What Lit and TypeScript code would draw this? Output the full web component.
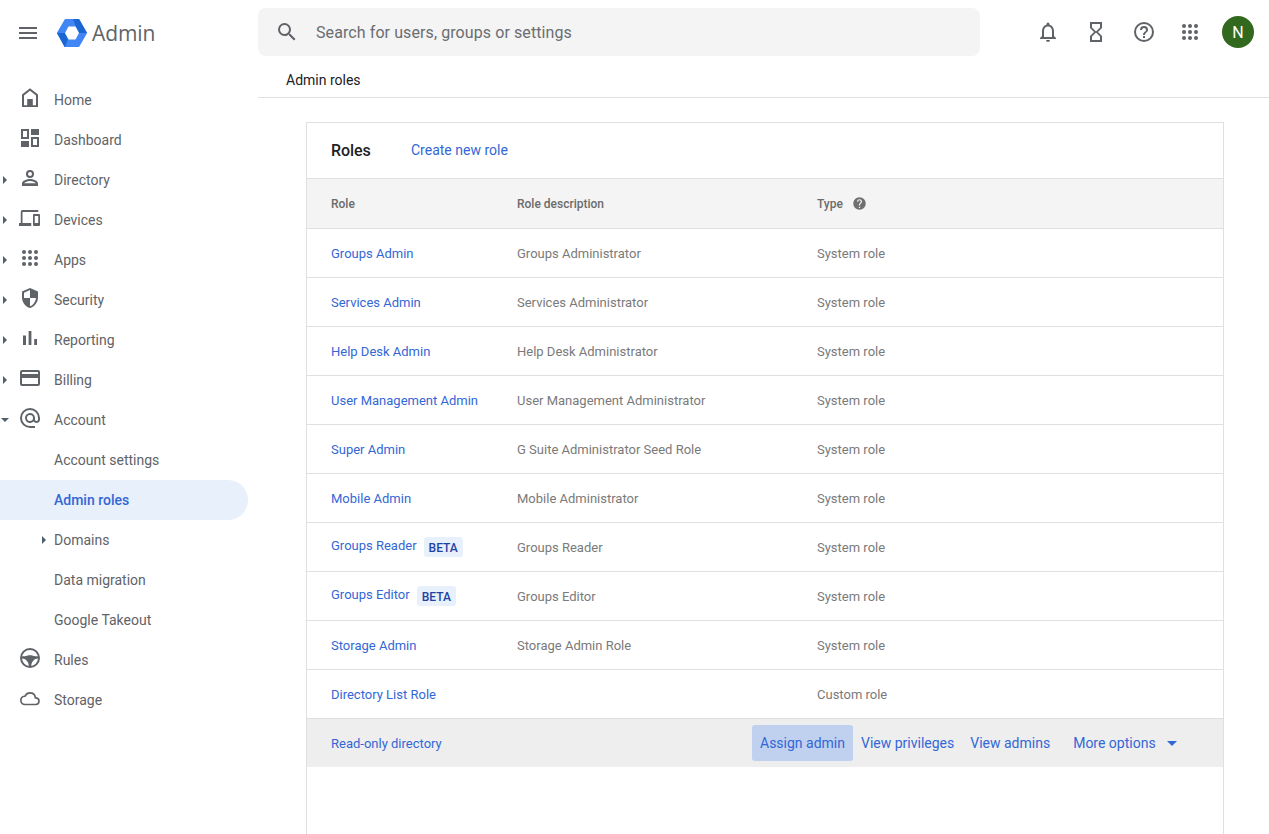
import { LitElement, html, css, svg } from "lit";
import { customElement } from "lit/decorators.js";

const g = (inner: unknown, cls = "ic") => html`<svg class=${cls} viewBox="0 0 24 24" fill="#5f6368">${inner}</svg>`;

const icons: Record<string, unknown> = {
  home: svg`<path fill-rule="evenodd" d="M12 2.200 4 8.600V21h16V8.600L12 2.200ZM12 4.700l6 4.800V19.200h-3.200V13H9.200v6.200H6V9.500l6-4.800Z"/>`,
  dashboard: svg`<path fill-rule="evenodd" d="M3 3h8v10H3V3Zm2 2v6h4V5H5ZM13 3h8v6h-8V3ZM3 15h8v6H3v-6ZM13 11h8v10h-8V11Zm2 2v6h4v-6h-4Z"/>`,
  person: svg`<path fill-rule="evenodd" d="M12 4a4 4 0 1 0 0 8 4 4 0 0 0 0-8Zm0 2a2 2 0 1 1 0 4 2 2 0 0 1 0-4ZM12 13c-3 0-8 1.500-8 4.500V20h16v-2.500C20 14.500 15 13 12 13Zm0 2c2.500 0 5.200 1.100 5.900 2.300H6.100C6.800 16.100 9.500 15 12 15Z"/>`,
  devices: svg`<path transform="translate(1 0) scale(.875 1)" fill-rule="evenodd" d="M4 6h18V4H4a2 2 0 0 0-2 2v11H0v3h14v-3H4V6Zm19 2h-6a1 1 0 0 0-1 1v10a1 1 0 0 0 1 1h6a1 1 0 0 0 1-1V9a1 1 0 0 0-1-1Zm-1 9h-4v-7h4v7Z"/>`,
  apps: svg`<circle cx="6" cy="6" r="2"/><circle cx="12" cy="6" r="2"/><circle cx="18" cy="6" r="2"/><circle cx="6" cy="12" r="2"/><circle cx="12" cy="12" r="2"/><circle cx="18" cy="12" r="2"/><circle cx="6" cy="18" r="2"/><circle cx="12" cy="18" r="2"/><circle cx="18" cy="18" r="2"/>`,
  security: svg`<path transform="translate(0 1)" d="M12 1 4 4.500v5.700c0 5 3.400 9.700 8 10.800 4.600-1.100 8-5.800 8-10.800V4.500L12 1Zm0 10h6c-.5 3.900-3 7.400-6 8.300V11H6V5.800l6-2.700V11Z"/>`,
  reporting: svg`<path d="M5 9.500h3V19H5V9.500ZM10.600 5h2.800v14h-2.800V5ZM16.200 13H19v6h-2.800v-6Z"/>`,
  billing: svg`<path fill-rule="evenodd" d="M20 4H4a2 2 0 0 0-2 2v12a2 2 0 0 0 2 2h16a2 2 0 0 0 2-2V6a2 2 0 0 0-2-2Zm0 14H4v-6h16v6Zm0-10H4V6h16v2Z"/>`,
  account: svg`<path fill-rule="evenodd" d="M12 2a10 10 0 0 0 0 20h5v-2h-5a8 8 0 1 1 8-8v1.430c0 .79-.71 1.570-1.500 1.570s-1.500-.78-1.500-1.570V12a5 5 0 1 0-1.460 3.530c.65.890 1.770 1.470 2.960 1.470 1.970 0 3.500-1.600 3.500-3.570V12A10 10 0 0 0 12 2Zm0 13a3 3 0 1 1 0-6 3 3 0 0 1 0 6Z"/>`,
  rules: svg`<path fill-rule="evenodd" d="M12 2a10 10 0 1 0 0 20 10 10 0 0 0 0-20Zm0 2a8 8 0 1 1 0 16 8 8 0 0 1 0-16Z"/><path d="M3 10.500c3 0 5-.5 6-.7 2-.6 4-.6 6 0 1 .2 3 .7 6 .7v2c-2.500 0-4 .5-5 1.500-1.200 1-2 2.200-2.400 3.500L13 21h-2l-.6-3.500C10 16.200 9.200 15 8 14c-1-1-2.500-1.500-5-1.500v-2Z"/>`,
  storage: svg`<path transform="translate(2 2.700) scale(.833)" fill-rule="evenodd" d="M19.350 10.040A7.490 7.490 0 0 0 12 4a7.480 7.480 0 0 0-6.650 4.040A5.990 5.990 0 0 0 0 14a6 6 0 0 0 6 6h13a5 5 0 0 0 .35-9.960ZM19 18H6a4 4 0 0 1-.38-7.980l1.020-.1.480-.9A5.470 5.470 0 0 1 12 6a5.500 5.500 0 0 1 5.390 4.430l.3 1.500 1.530.11A3 3 0 0 1 19 18Z"/>`,
};

const nav = [
  { l: "Home", i: "home" },
  { l: "Dashboard", i: "dashboard" },
  { l: "Directory", i: "person", a: "r" },
  { l: "Devices", i: "devices", a: "r" },
  { l: "Apps", i: "apps", a: "r" },
  { l: "Security", i: "security", a: "r" },
  { l: "Reporting", i: "reporting", a: "r" },
  { l: "Billing", i: "billing", a: "r" },
  { l: "Account", i: "account", a: "d" },
  { l: "Account settings" },
  { l: "Admin roles", sel: true },
  { l: "Domains", sub: true },
  { l: "Data migration" },
  { l: "Google Takeout" },
  { l: "Rules", i: "rules" },
  { l: "Storage", i: "storage" },
];

const roles = [
  ["Groups Admin", "Groups Administrator", "System role"],
  ["Services Admin", "Services Administrator", "System role"],
  ["Help Desk Admin", "Help Desk Administrator", "System role"],
  ["User Management Admin", "User Management Administrator", "System role"],
  ["Super Admin", "G Suite Administrator Seed Role", "System role"],
  ["Mobile Admin", "Mobile Administrator", "System role"],
  ["Groups Reader", "Groups Reader", "System role", true],
  ["Groups Editor", "Groups Editor", "System role", true],
  ["Storage Admin", "Storage Admin Role", "System role"],
  ["Directory List Role", "", "Custom role"],
] as [string, string, string, boolean?][];

const arrowR = html`<svg class="ar" viewBox="0 0 6 8"><path d="M1 0l4 4-4 4z"/></svg>`;
const arrowD = html`<svg class="ad" viewBox="0 0 8 6"><path d="M0 1h8L4 5z"/></svg>`;

@customElement("app-root")
export class AppRoot extends LitElement {
  static styles = css`
    :host { display: block; width: 1269px; height: 834px; overflow: hidden; background: #fff;
      font-family: Roboto, "Liberation Sans", sans-serif; font-size: 14px; color: #5f6368; }
    .page { display: grid; grid-template-columns: 258px 1fr; height: 834px; }
    .side { display: flex; flex-direction: column; }
    .brand { height: 64px; display: flex; align-items: center; margin-top: 2px; margin-bottom: 14px; }
    .burger { width: 18px; height: 12px; margin: 0 20px 2px 19px; flex: none; }
    .logo { width: 30px; height: 28px; flex: none; margin-bottom: 2px; }
    .word { font-family: "Open Sans", Roboto, sans-serif; font-size: 21px; color: #5f6368; margin-left: 5px; margin-bottom: 2px; letter-spacing: -.1px; }
    .item { height: 40px; display: grid; grid-template-columns: 18px 24px 12px 1fr; align-items: center; width: 248px; color: #5f6368; }
    .item.sel { background: #e8f0fb; border-radius: 0 20px 20px 0; color: #3367d6; font-weight: 500; }
    .item .lab { grid-column: 4; }
    .item .ic { transform: translateY(-2px); }
    .ic { width: 24px; height: 24px; display: block; }
    .ar { width: 6px; height: 8px; fill: #4f5f6b; display: block; margin-left: 2px; }
    .sub .ar { margin-left: -1px; }
    .ad { width: 8px; height: 6px; fill: #4f5f6b; display: block; margin-left: 1px; }
    .main { display: flex; flex-direction: column; min-width: 0; }
    .top { height: 64px; display: flex; align-items: flex-start; padding-top: 8px; box-sizing: border-box; }
    .search { width: 722px; height: 48px; background: #f4f4f4; border-radius: 8px; display: flex; align-items: center; flex: none; }
    .search svg { width: 24px; height: 24px; margin-left: 17px; fill: #5f6368; }
    .search span { margin-left: 17px; font-size: 16px; color: #6a6d71; letter-spacing: .09px; }
    .tools { display: flex; align-items: center; height: 48px; margin-left: 56px; }
    .tools .ic { margin-right: 24px; }
    .tools .ic.help { margin-right: 22px; }
    .tools .ic.last { margin-right: 20px; }
    .avatar { width: 32px; height: 32px; border-radius: 50%; background: #33691e; color: #fff; display: flex; align-items: center; justify-content: center; font-size: 16px; font-weight: 400; }
    .crumb { height: 31px; padding-bottom: 2px; border-bottom: 1px solid #e0e0e0; padding-left: 28px; display: flex; align-items: center; color: #202124; flex: none; }
    .card { margin: 24px 45px 0 48px; border: 1px solid #e0e0e0; border-bottom: 0; flex: 1; }
    .head { height: 55px; display: flex; align-items: center; padding-left: 24px; border-bottom: 1px solid #e0e0e0; }
    .head b { font-size: 16px; font-weight: 500; color: #202124; width: 80px; letter-spacing: -.1px; }
    .head a { position: relative; top: -1px; }
    a { color: #3367d6; text-decoration: none; }
    .row { display: grid; grid-template-columns: 186px 300px 1fr; padding-left: 24px; height: 48px; align-items: center; border-bottom: 1px solid #e0e0e0; font-size: 13px; color: #7a7a7a; }
    .row.th { height: 49px; background: #f4f4f4; font-size: 12px; font-weight: 500; color: #6b6b6b; }
    .t { display: flex; align-items: center; gap: 9px; }
    .t svg { width: 15px; height: 15px; fill: #707070; }
    .nm { display: flex; align-items: center; }
    .nm a.up { position: relative; top: -2px; }
    .beta { margin-left: 7px; background: #e8f0fb; color: #1f43a3; font-size: 12px; font-weight: 500; height: 20px; padding: 1px 5px 0; box-sizing: border-box; border-radius: 3px; display: inline-flex; align-items: center; }
    .foot { height: 48px; background: #eeeeee; display: flex; align-items: center; padding-left: 24px; font-size: 14px; }
    .foot .ro { font-size: 13px; width: 421px; }
    .btn { height: 36px; padding: 0 8px; border-radius: 3px; display: flex; align-items: center; color: #3367d6; }
    .btn.on { background: #bfd1ef; }
    .btn.more { margin-left: 7px; }
    .caret { width: 10px; height: 5px; fill: #3367d6; margin-left: 11px; }
  `;

  render() {
    return html`<div class="page">
      <aside class="side">
        <div class="brand">
          <svg class="burger" viewBox="0 0 18 12" fill="#5f6368"><path d="M0 0h18v2H0zM0 5h18v2H0zM0 10h18v2H0z"/></svg>
          <svg class="logo" viewBox="0 0 30 28">
            <path fill="#4285f4" stroke="#4285f4" stroke-width="2" stroke-linejoin="round" d="M8.500 1h13L29 14l-7.500 13h-13L1 14z"/>
            <path fill="#1a67d2" d="M16 0h6l8 14h-8l-3-6zM0 14h8l3 6-3 8h-.5z"/>
            <path fill="#fff" d="M11.500 7.500h7L22 14l-3.500 6.500h-7L8 14z"/>
          </svg>
          <span class="word">Admin</span>
        </div>
        ${nav.map((n) => html`<div class="item ${n.sel ? "sel" : ""}">
          <span>${n.a === "r" ? arrowR : n.a === "d" ? arrowD : ""}</span>
          <span>${n.i ? g(icons[n.i]) : ""}</span>
          <span class="sub">${n.sub ? arrowR : ""}</span>
          <span class="lab">${n.l}</span>
        </div>`)}
      </aside>
      <main class="main">
        <div class="top">
          <div class="search">
            <svg viewBox="0 0 24 24"><path d="M15.500 14h-.79l-.28-.27A6.470 6.470 0 0 0 16 9.500 6.500 6.500 0 1 0 9.500 16c1.610 0 3.090-.59 4.230-1.570l.27.28v.79l5 4.990L20.490 19l-4.990-5Zm-6 0a4.500 4.500 0 1 1 0-9 4.500 4.500 0 0 1 0 9Z"/></svg>
            <span>Search for users, groups or settings</span>
          </div>
          <div class="tools">
            ${g(svg`<path fill-rule="evenodd" d="M12 22a2 2 0 0 0 2-2h-4a2 2 0 0 0 2 2Zm6-6v-5c0-3.070-1.640-5.640-4.500-6.320V4a1.500 1.500 0 0 0-3 0v.68C7.630 5.360 6 7.920 6 11v5l-2 2v1h16v-1l-2-2Zm-2 1H8v-6c0-2.480 1.510-4.500 4-4.500s4 2.020 4 4.500v6Z"/>`)}
            ${g(svg`<path fill-rule="evenodd" d="M6 2v6l4 4-4 4v6h12v-6l-4-4 4-4V2H6Zm10 14.500V20H8v-3.500l4-4 4 4ZM12 11.500l-4-4V4h8v3.500l-4 4Z"/>`)}
            ${g(svg`<path fill-rule="evenodd" d="M11 18h2v-2h-2v2Zm1-16a10 10 0 1 0 0 20 10 10 0 0 0 0-20Zm0 18a8 8 0 1 1 0-16 8 8 0 0 1 0 16Zm0-14a4 4 0 0 0-4 4h2a2 2 0 1 1 4 0c0 2-3 1.750-3 5h2c0-2.250 3-2.500 3-5a4 4 0 0 0-4-4Z"/>`, "ic help")}
            ${g(icons.apps, "ic last")}
            <div class="avatar">N</div>
          </div>
        </div>
        <div class="crumb">Admin roles</div>
        <section class="card">
          <div class="head"><b>Roles</b><a>Create new role</a></div>
          <div class="row th">
            <span>Role</span><span>Role description</span>
            <span class="t">Type
              <svg viewBox="0 0 24 24"><path d="M12 2a10 10 0 1 0 0 20 10 10 0 0 0 0-20Zm1 17h-2v-2h2v2Zm2.070-7.750-.9.920C13.450 12.900 13 13.500 13 15h-2v-.5c0-1.100.45-2.100 1.170-2.830l1.240-1.260A2 2 0 1 0 10 9H8a4 4 0 1 1 8 0c0 .88-.36 1.680-.93 2.250Z"/></svg>
            </span>
          </div>
          ${roles.map(([a, b, c, beta]) => html`<div class="row">
            <span class="nm"><a class=${beta ? "up" : ""}>${a}</a>${beta ? html`<span class="beta">BETA</span>` : ""}</span>
            <span>${b}</span><span>${c}</span>
          </div>`)}
          <div class="foot">
            <a class="ro">Read-only directory</a>
            <a class="btn on">Assign admin</a>
            <a class="btn">View privileges</a>
            <a class="btn">View admins</a>
            <a class="btn more">More options<svg class="caret" viewBox="0 0 12 6"><path d="M0 0h12L6 6z"/></svg></a>
          </div>
        </section>
      </main>
    </div>`;
  }
}
